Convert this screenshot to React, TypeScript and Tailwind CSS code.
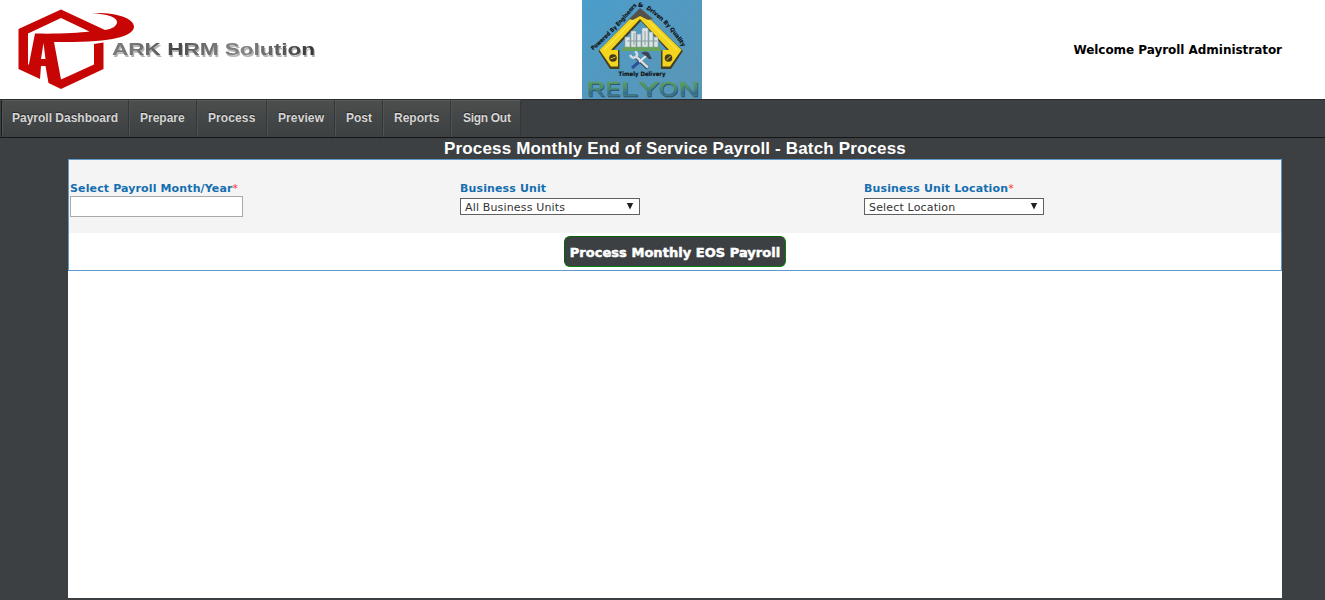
import type { ReactNode } from "react";

const menu = [
  { label: "Payroll Dashboard", cls: "w-[128px] pl-[10px] rounded-l-[3px] border-l border-l-[#191b1c]" },
  { label: "Prepare", cls: "w-[68px] pl-[11px]" },
  { label: "Process", cls: "w-[70px] pl-[11px] tracking-[0.1px]" },
  { label: "Preview", cls: "w-[68px] pl-[11px] tracking-[0.1px]" },
  { label: "Post", cls: "w-[48px] pl-[11px]" },
  { label: "Reports", cls: "w-[68px] pl-[11px]" },
  { label: "Sign Out", cls: "w-[70px] pl-[12px] tracking-[-0.3px]" },
];

const brandLetters = [
  { ch: "R", x: 5, w: 18 },
  { ch: "E", x: 24, w: 14 },
  { ch: "L", x: 39, w: 17 },
  { ch: "Y", x: 57, w: 20 },
  { ch: "O", x: 77, w: 19 },
  { ch: "N", x: 97, w: 20 },
];

function ArkLogo() {
  return (
    <svg width="330" height="98" viewBox="0 0 330 98" className="block shrink-0">
      <defs>
        <linearGradient id="ark" x1="0" x2="1" y1="0" y2="0">
          <stop offset="0" stopColor="#777" />
          <stop offset="0.1" stopColor="#777" />
          <stop offset="0.2" stopColor="#666" />
          <stop offset="0.32" stopColor="#444" />
          <stop offset="0.4" stopColor="#666" />
          <stop offset="0.65" stopColor="#858585" />
          <stop offset="1" stopColor="#333" />
        </linearGradient>
        <filter id="soft" x="-5%" y="-30%" width="110%" height="170%">
          <feGaussianBlur stdDeviation="0.5" />
        </filter>
      </defs>
      <path
        fill="#c80505"
        fillRule="evenodd"
        d="M61 9.500 L105 30 C112 29 117 26 117 22 C117 17 107 14 92 13 C115 12 134 18 134 26.500 C134 37 108 43 54 42 L61 79.500 L94 64.500 L94 44 L103.500 42.500 L103.500 69 L61 89 L48.500 83 L45.500 66 L41 66 L40 79 L18.500 69 L18.500 29 Z M61 18 L28 33.500 L28 65 L29 64 L35 33.500 C58 34 78 33 89.500 31.500 Z M43.500 43 L41 59 L45.500 59 Z"
      />
      <g fontFamily="Liberation Sans, Arial, sans-serif" fontSize="16.500" fontWeight="700" filter="url(#soft)">
        <text x="113.200" y="56.500" textLength="203" lengthAdjust="spacingAndGlyphs" fill="#b5b5b5">ARK HRM Solution</text>
        <text x="112" y="55" textLength="203" lengthAdjust="spacingAndGlyphs" fill="url(#ark)">ARK HRM Solution</text>
      </g>
    </svg>
  );
}

function RelyonLogo() {
  return (
    <svg width="120" height="99" viewBox="0 0 120 99" className="block">
      <defs>
        <linearGradient id="sky" x1="0" y1="0" x2="1" y2="1">
          <stop offset="0" stopColor="#4b9dcb" />
          <stop offset="1" stopColor="#5b95b4" />
        </linearGradient>
        <linearGradient id="word" x1="0" y1="0" x2="0" y2="1">
          <stop offset="0" stopColor="#62a656" />
          <stop offset="0.45" stopColor="#4f9467" />
          <stop offset="0.75" stopColor="#356b94" />
          <stop offset="1" stopColor="#5d9c56" />
        </linearGradient>
        <path id="leftArc" d="M11 50.500 Q34 31 56 4" />
        <path id="rightArc" d="M64 9 Q86 23 101 48" />
      </defs>
      <rect width="120" height="99" fill="url(#sky)" />
      <path d="M58 9 L16.500 51 L28 69 L37.500 69 L37.500 50 L32 50 L59 21 L85 50 L79 50 L79 69 L89 69 L101 51 Z" fill="#453f24" />
      <path d="M58 9 L17.500 50 L29 66.500 L36 66.500 L36 50 L29 50 L58 19 L87 50 L80.500 50 L80.500 66.500 L88 66.500 L99.500 50 Z" fill="#f2d51c" />
      <path d="M22 50 L56 15.500 M61 15.500 L95 50" stroke="#fff06a" strokeWidth="1" />
      <path d="M58 8 L47 19 L51 20 L58 16 L66 20 L71 19 Z" fill="#55504a" />
      <path d="M44 43 L75 43 L80 51 L39 51 Z" fill="#67a458" />
      <path d="M43 37h5v10h-5z M49 31h5v16h-5z M55 34h4v13h-4z M60 28h6v19h-6z M67 32h4v15h-4z M72 37h4v10h-4z" fill="#dce5e7" stroke="#93a5a5" strokeWidth=".7" />
      <path d="M45 41h30 M52 33v12 M63 31v14" stroke="#8b9d9b" strokeWidth="1" />
      <path d="M53 56 L66 68" stroke="#33475e" strokeWidth="4" />
      <path d="M53 55.500 L66 67.500" stroke="#d5dce0" strokeWidth="2.600" />
      <path d="M48 55 Q50 59 54 57 Q57 54 53 51.500" stroke="#d3dadd" strokeWidth="2.400" fill="none" />
      <path d="M64 56 L57 62" stroke="#e1e5e7" strokeWidth="2.200" />
      <path d="M57 62 L50 68" stroke="#304f9b" strokeWidth="3" />
      <path d="M59 53 Q64 50 67 53 L70 59 L67 59 L64 56 Z" fill="#3b4551" />
      <g fill="#473d18">
        <circle cx="31" cy="58" r="3.800" />
        <circle cx="86.500" cy="58" r="3.800" />
      </g>
      <path d="M28.500 59l5-2 M84.500 60l4-4" stroke="#d8c352" strokeWidth="1" />
      <g fontFamily="DejaVu Sans, sans-serif" fontSize="6" fontWeight="700" fill="#111" stroke="#111" strokeWidth=".15">
        <text fontSize="5.800" textLength="63" lengthAdjust="spacingAndGlyphs"><textPath href="#leftArc" textLength="63" lengthAdjust="spacingAndGlyphs">Powered By Engineers</textPath></text>
        <text x="56" y="6.500">&amp;</text>
        <text fontSize="5.800" textLength="53" lengthAdjust="spacingAndGlyphs"><textPath href="#rightArc" textLength="53" lengthAdjust="spacingAndGlyphs">Driven By Quality</textPath></text>
        <text x="36.500" y="76" textLength="47" lengthAdjust="spacingAndGlyphs">Timely Delivery</text>
      </g>
      <g fontFamily="Liberation Sans, Arial, sans-serif" fontSize="21" fontWeight="400" strokeWidth=".7">
        {brandLetters.map((l) => (
          <g key={l.ch}>
            <text x={l.x + 0.7} y="96.500" textLength={l.w} lengthAdjust="spacingAndGlyphs" fill="#31526b" stroke="#31526b">{l.ch}</text>
            <text x={l.x} y="95.500" textLength={l.w} lengthAdjust="spacingAndGlyphs" fill="url(#word)" stroke="url(#word)">{l.ch}</text>
          </g>
        ))}
      </g>
    </svg>
  );
}

function Label({ children, required }: { children: ReactNode; required?: boolean }) {
  return (
    <div className="h-[14px] whitespace-nowrap pt-px text-[11px] leading-[14px]">
      <span className="font-bold tracking-[0.13px] text-[#156eb0]">{children}</span>
      {required && <span className="text-[#ff3030]">*</span>}
    </div>
  );
}

function SelectBox({ value }: { value: string }) {
  return (
    <button className="mt-[3px] flex h-[17px] w-[180px] items-center justify-between border border-[#606060] bg-white pr-[5px] pl-[4px] text-[11px] leading-[15px] tracking-[0.16px] text-[#333]">
      <span className="pt-[2px]">{value}</span>
      <svg width="8" height="7" viewBox="0 0 8 7" className="mb-[1px]"><path d="M.8 0h6.400L4 6.500Z" fill="#222" /></svg>
    </button>
  );
}

export default function App() {
  return (
    <div className="flex h-[600px] w-[1325px] flex-col overflow-hidden bg-[#3c4042] font-['DejaVu_Sans',Verdana,sans-serif]">
      <header className="grid h-[99px] shrink-0 grid-cols-[582px_120px_1fr] items-start bg-white">
        <ArkLogo />
        <RelyonLogo />
        <div className="pt-[42px] pr-[43px] text-right text-[12px] leading-[16px] font-bold tracking-[-0.04px] whitespace-nowrap text-black">Welcome Payroll Administrator</div>
      </header>
      <nav className="flex h-[39px] shrink-0 border-t border-b border-t-[#292b2d] border-b-[#151717] font-['Liberation_Sans',Arial,sans-serif] text-[12px] leading-[34px] font-bold text-[#d5d5d5]">
        {menu.map((m) => (
          <a key={m.label} className={`block shrink-0 border-t border-r border-t-[#5a5c5c] border-r-[#333638] bg-linear-to-b from-[#4c4e4d] to-[#3c4042] whitespace-nowrap shadow-[inset_1px_0_0_#505354] [text-shadow:0_-1px_1px_#252525] first:ml-px ${m.cls}`}>
            {m.label}
          </a>
        ))}
      </nav>
      <h1 className="h-[21px] shrink-0 pl-[25px] text-center font-['Liberation_Sans',Arial,sans-serif] text-[17px] leading-[21px] font-bold tracking-[0.155px] text-white">
        Process Monthly End of Service Payroll - Batch Process
      </h1>
      <main className="ml-[68px] h-[439px] w-[1214px] shrink-0 bg-white">
        <section className="h-[112px] border border-[#5f9acb]">
          <div className="grid h-[73px] grid-cols-[390px_404px_1fr] bg-[#f4f4f4] pt-[21px] pl-px">
            <div>
              <Label required>Select Payroll Month/Year</Label>
              <input className="mt-px block h-[21px] w-[173px] border border-[#a9a9a9] bg-white" />
            </div>
            <div>
              <Label>Business Unit</Label>
              <SelectBox value="All Business Units" />
            </div>
            <div>
              <Label required>Business Unit Location</Label>
              <SelectBox value="Select Location" />
            </div>
          </div>
          <div className="flex justify-center pt-[3px]">
            <button className="h-[31px] w-[222px] rounded-[6px] border border-t-[#006400] border-r-[#078007] border-b-[#078007] border-l-[#006400] bg-[#3c4042] pt-[2px] text-[13px] leading-[27px] font-bold tracking-[0.03px] whitespace-nowrap text-white [-webkit-text-stroke:0.5px_white]">
              Process Monthly EOS Payroll
            </button>
          </div>
        </section>
      </main>
    </div>
  );
}
